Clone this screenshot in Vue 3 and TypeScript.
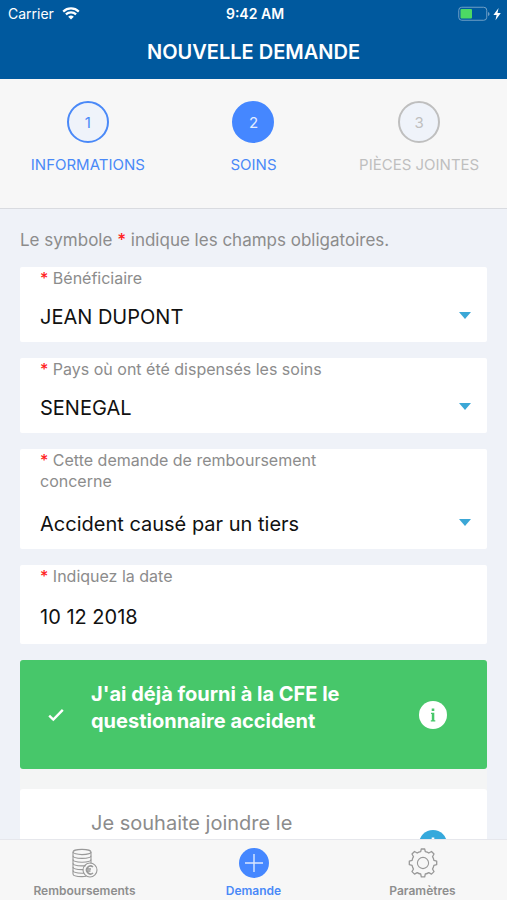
<script setup lang="ts">
import { ref } from 'vue'

interface Step {
  number: number
  label: string
  state: 'done' | 'active' | 'todo'
}

interface SelectField {
  id: string
  label: string
  value: string
  long?: boolean
}

interface Choice {
  id: string
  text: string
  checked: boolean
}

const steps: Step[] = [
  { number: 1, label: 'INFORMATIONS', state: 'done' },
  { number: 2, label: 'SOINS', state: 'active' },
  { number: 3, label: 'PIÈCES JOINTES', state: 'todo' },
]

const selects = ref<SelectField[]>([
  { id: 'beneficiaire', label: 'Bénéficiaire', value: 'JEAN DUPONT' },
  { id: 'pays', label: 'Pays où ont été dispensés les soins', value: 'SENEGAL' },
  {
    id: 'motif',
    label: 'Cette demande de remboursement concerne',
    value: 'Accident causé par un tiers',
    long: true,
  },
])

const date = ref('10 12 2018')

const choices = ref<Choice[]>([
  { id: 'fourni', text: "J'ai déjà fourni à la CFE le questionnaire accident", checked: true },
  { id: 'joindre', text: 'Je souhaite joindre le', checked: false },
])
</script>

<template>
  <div class="screen">
    <header class="header">
      <div class="status">
        <div class="carrier">
          <span>Carrier</span>
          <svg class="wifi" viewBox="0 0 18 13" aria-hidden="true">
            <path d="M1.2 4.6a11.2 11.2 0 0 1 15.6 0" />
            <path d="M3.9 7.4a7.3 7.3 0 0 1 10.2 0" />
            <path class="wifi-dot" d="M9 12.6 6.2 9.8a4 4 0 0 1 5.6 0z" />
          </svg>
        </div>
        <span class="time">9:42 AM</span>
        <svg class="battery" viewBox="0 0 44 16" aria-hidden="true">
          <rect class="battery-case" x="0.75" y="1.25" width="28" height="13" rx="3" />
          <rect class="battery-level" x="2.5" y="3" width="11.5" height="9.500" rx="1" />
          <path class="battery-tip" d="M30 6v4q1.6-.5 1.6-2T30 6z" />
          <path class="battery-bolt" d="M40.6 2 35.4 9h3.2l-1.1 5.2L42.8 7h-3.3z" />
        </svg>
      </div>
      <h1 class="title">NOUVELLE DEMANDE</h1>
    </header>

    <ol class="steps">
      <li v-for="step in steps" :key="step.number" class="step" :class="step.state">
        <span class="step-number">{{ step.number }}</span>
        <span class="step-label">{{ step.label }}</span>
      </li>
    </ol>

    <main class="content">
      <p class="hint">Le symbole <span class="star">*</span> indique les champs obligatoires.</p>

      <form class="form" @submit.prevent>
        <div v-for="field in selects" :key="field.id" class="field">
          <label class="field-label" :class="{ long: field.long }" :for="field.id">
            <span class="star">*</span> {{ field.label }}
          </label>
          <div class="select-row">
            <select :id="field.id" v-model="field.value" class="control">
              <option :value="field.value">{{ field.value }}</option>
            </select>
            <svg class="caret" viewBox="0 0 12 7" aria-hidden="true"><path d="M0 0h12L6 7z" /></svg>
          </div>
        </div>

        <div class="field">
          <label class="field-label" for="date"><span class="star">*</span> Indiquez la date</label>
          <input id="date" v-model="date" class="control date" type="text" />
        </div>

        <div class="choices">
          <div v-for="choice in choices" :key="choice.id" class="choice" :class="{ checked: choice.checked }">
            <span class="tick">
              <input :id="choice.id" v-model="choice.checked" class="tick-input" type="checkbox" />
              <svg v-if="choice.checked" class="tick-mark" viewBox="0 0 16 14" aria-hidden="true">
                <path d="M1.200 7.600 5.300 11.500 14.800 1.800" />
              </svg>
            </span>
            <label class="choice-text" :for="choice.id">{{ choice.text }}</label>
            <button class="info" type="button">
              <svg viewBox="0 0 28 28" aria-hidden="true">
                <circle class="info-disc" cx="14" cy="14" r="14" />
                <path class="info-mark" d="M12.700 7.600h2.600v2.300h-2.600zM12 11.700h3.300v7.600h1v1.200h-4.500v-1.200h1v-6.400H12z" />
              </svg>
            </button>
          </div>
        </div>
      </form>
    </main>

    <nav class="tabs">
      <a class="tab" href="#remboursements">
        <svg class="tab-icon" viewBox="0 0 30 30" aria-hidden="true">
          <ellipse cx="12" cy="4" rx="9" ry="2.6" />
          <path d="M3 4v22c0 1.6 4 2.6 9 2.6 1.600 0 3-.1 4.300-.3M21 4v11.500" />
          <path d="M3 7.800c0 1.500 4 2.600 9 2.600s9-1.100 9-2.600M3 11.600c0 1.500 4 2.600 9 2.600s9-1.100 9-2.600M3 15.300c0 1.500 4 2.600 9 2.600 1.400 0 2.700-.1 3.800-.3M3 19c0 1.500 4 2.600 9 2.600h1.200M3 22.600c0 1.500 4 2.600 9 2.600h1.800" />
          <circle cx="20" cy="22" r="7" />
          <path class="euro" d="M23 19a3.900 3.900 0 1 0 0 6M16 21h5M16 23h4.500" />
        </svg>
        <span>Remboursements</span>
      </a>
      <a class="tab current" href="#demande">
        <svg class="tab-icon" viewBox="0 0 30 30" aria-hidden="true">
          <circle class="plus-disc" cx="15" cy="15" r="15" />
          <path class="plus" d="M15 6v18M6 15h18" />
        </svg>
        <span>Demande</span>
      </a>
      <a class="tab" href="#parametres">
        <svg class="tab-icon" viewBox="0 0 30 30" aria-hidden="true">
          <path
            class="gear"
            d="M12.700 3.600 13.300 1h3.400l.6 2.600q2 .4 3.500 1.400l2.700-1.500 2.500 2.500-1.500 2.700q1 1.600 1.400 3.600l2.800.9v3.400l-2.800.8q-.4 2-1.400 3.600l1.500 2.600-2.500 2.500-2.700-1.500q-1.600 1-3.500 1.400l-.6 2.800h-3.400l-.6-2.800q-2-.4-3.500-1.400l-2.700 1.500L4 23.600 5.500 21q-1-1.600-1.400-3.600l-2.800-.8v-3.400l2.800-.9q.4-2 1.400-3.600L4 6l2.500-2.500L9.200 5q1.500-1 3.500-1.400z"
          />
          <circle cx="15" cy="15" r="5.600" />
        </svg>
        <span>Paramètres</span>
      </a>
    </nav>
  </div>
</template>

<style>
body {
  margin: 0;
}
</style>

<style scoped>
.screen {
  display: flex;
  flex-direction: column;
  height: 100vh;
  overflow: hidden;
  background: #eff2f8;
  color: #8c8c8c;
  font-family: Inter, "Liberation Sans", sans-serif;
}

.header {
  flex: none;
  padding-bottom: 9px;
  background: #00599e;
  color: #fff;
}

.status {
  display: grid;
  grid-template-columns: 1fr auto 1fr;
  align-items: center;
  height: 27px;
  padding: 0 5px 0 8px;
  font-size: 14px;
}

.carrier {
  display: flex;
  align-items: center;
  gap: 8px;
}

.wifi {
  width: 18px;
  height: 13px;
  fill: none;
  stroke: #fff;
  stroke-width: 2.2;
}

.wifi-dot {
  fill: #fff;
  stroke: none;
}

.time {
  font-weight: 600;
}

.battery {
  justify-self: end;
  width: 44px;
  height: 16px;
}

.battery-case {
  fill: none;
  stroke: #6e9fc6;
  stroke-width: 1;
}

.battery-level {
  fill: #4cd964;
}

.battery-tip {
  fill: #6e9fc6;
}

.battery-bolt {
  fill: #fff;
}

.title {
  margin: 7px 0 0;
  font-size: 20px;
  font-weight: 600;
  line-height: 36px;
  text-align: center;
}

.steps {
  display: grid;
  flex: none;
  grid-template-columns: repeat(3, 1fr);
  margin: 0;
  padding: 22px 5px 33px;
  border-bottom: 1px solid #d9dbe0;
  background: #f7f7f7;
  list-style: none;
}

.step {
  display: flex;
  flex-direction: column;
  align-items: center;
  gap: 12px;
  color: #4a89f8;
}

.step-number {
  box-sizing: border-box;
  display: grid;
  place-items: center;
  width: 42px;
  height: 42px;
  border: 2px solid currentColor;
  border-radius: 50%;
  background: #eff3fa;
  font-size: 15px;
}

.step-label {
  font-size: 15px;
  line-height: 20px;
}

.step.active .step-number {
  border-color: #4587ff;
  background: #4587ff;
  color: #e3edff;
}

.step.todo {
  color: #bfbfbf;
}

.content {
  flex: 1;
  min-height: 0;
  padding: 20px 20px 0;
  overflow-y: auto;
  scrollbar-width: none;
}

.hint {
  margin: 0 0 16px;
  font-size: 17px;
  line-height: 22px;
}

.star {
  color: #f22;
  font-weight: 500;
}

.form {
  display: flex;
  flex-direction: column;
  gap: 16px;
}

.field {
  display: flex;
  flex-direction: column;
  align-items: stretch;
  padding: 1px 16px 6px 20px;
  border-radius: 2px;
  background: #fff;
}

.field-label {
  max-width: 70%;
  padding-bottom: 9px;
  font-size: 16px;
  line-height: 21px;
}

.field-label.long {
  padding-bottom: 13px;
}

.select-row {
  display: grid;
  align-items: center;
}

.control {
  grid-area: 1 / 1;
  box-sizing: border-box;
  width: 100%;
  height: 38px;
  margin: 0;
  padding: 0;
  border: 0;
  outline: 0;
  appearance: none;
  background: transparent;
  color: #111;
  font-family: inherit;
  font-size: 20px;
}

.control.date {
  height: 42px;
}

.caret {
  grid-area: 1 / 1;
  justify-self: end;
  width: 12px;
  height: 7px;
  margin-bottom: 3px;
  fill: #3ba7d6;
  pointer-events: none;
}

.choices {
  display: flex;
  flex-direction: column;
  gap: 20px;
  background: #f4f5f5;
}

.choice {
  display: grid;
  flex: none;
  grid-template-columns: 32px 1fr 28px;
  column-gap: 19px;
  align-items: center;
  box-sizing: border-box;
  min-height: 109px;
  padding: 0 40px 0 20px;
  border-radius: 3px;
  background: #fff;
  font-size: 20px;
  line-height: 27px;
}

.choice.checked {
  background: #47c76a;
  color: #fff;
  font-weight: 700;
}

.tick {
  display: grid;
  place-items: center;
}

.tick-input {
  grid-area: 1 / 1;
  width: 30px;
  height: 30px;
  margin: 0;
  appearance: none;
}

.tick-mark {
  grid-area: 1 / 1;
  width: 16px;
  height: 14px;
  fill: none;
  stroke: #fff;
  stroke-width: 2.4;
  pointer-events: none;
}

.choice-text {
  align-self: start;
  max-width: 265px;
  padding: 21px 0;
}

.info {
  width: 28px;
  height: 28px;
  padding: 0;
  border: 0;
  border-radius: 50%;
  background: none;
}

.info svg {
  display: block;
}

.info-disc {
  fill: #36a9dc;
}

.info-mark {
  fill: #fff;
}

.checked .info-disc {
  fill: #fff;
}

.checked .info-mark {
  fill: #47c76a;
}

.tabs {
  display: grid;
  flex: none;
  grid-template-columns: repeat(3, 1fr);
  border-top: 1px solid #e6e7ec;
  background: #f7f7f7;
}

.tab {
  display: flex;
  flex-direction: column;
  align-items: center;
  gap: 4px;
  padding: 8px 0 1px;
  color: #8e8e8e;
  font-size: 12px;
  font-weight: 600;
  line-height: 17px;
  text-decoration: none;
}

.tab.current {
  color: #4a89f8;
}

.tab-icon {
  width: 30px;
  height: 30px;
  fill: none;
  stroke: #999;
  stroke-width: 1.1;
}

.euro {
  stroke-width: 1.6;
}

.gear {
  stroke-linejoin: round;
  stroke-width: 1.3;
}

.plus-disc {
  fill: #4587ff;
  stroke: none;
}

.plus {
  stroke: #dbe8ff;
  stroke-width: 1.4;
}
</style>
